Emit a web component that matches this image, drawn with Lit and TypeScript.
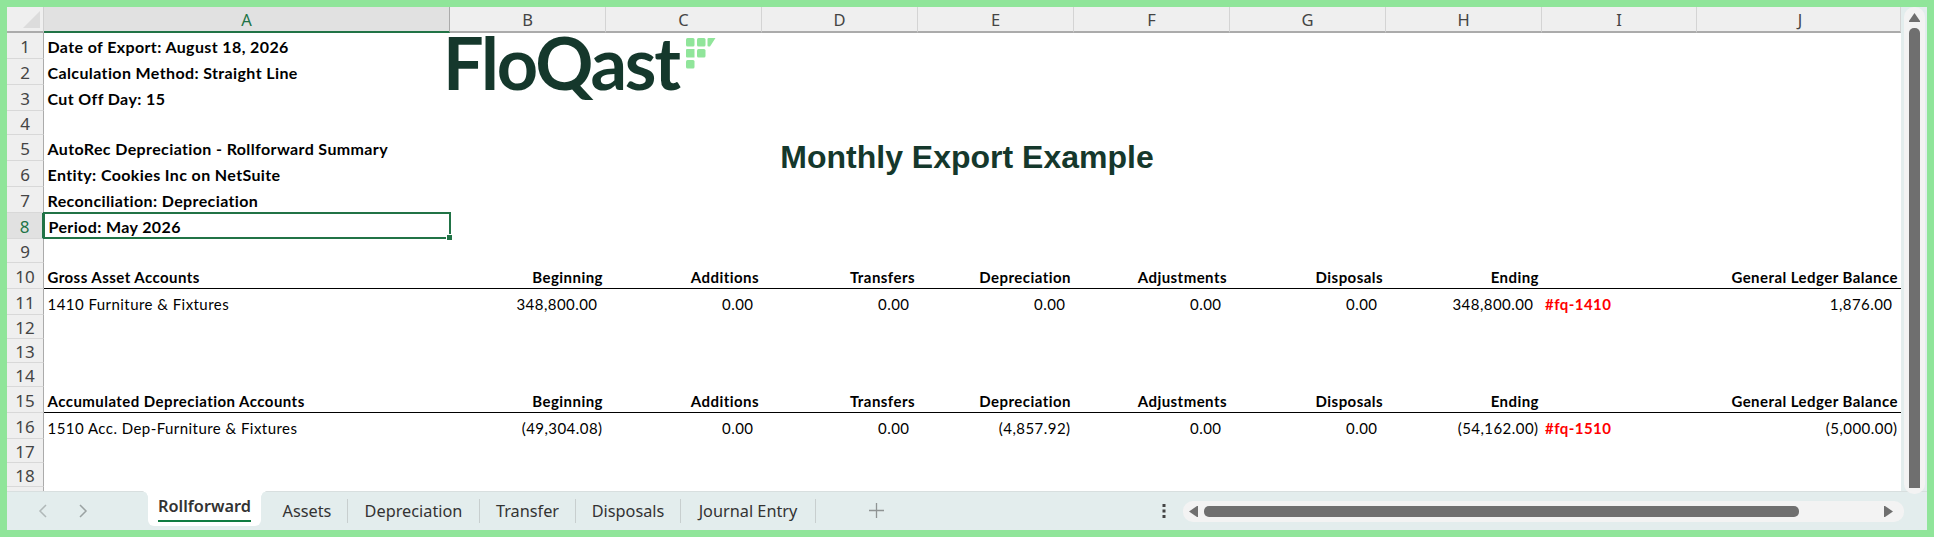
import { LitElement, html, css } from "lit";
import { customElement } from "lit/decorators.js";

const ROW_H = [26, 26, 26, 24, 26, 26, 26, 26, 24, 26, 26, 24, 24, 24, 26, 26, 24, 24, 24];
const COLS = ["A", "B", "C", "D", "E", "F", "G", "H", "I", "J"];
const META: Record<number, string> = {
  1: "Date of Export: August 18, 2026",
  2: "Calculation Method: Straight Line",
  3: "Cut Off Day: 15",
  5: "AutoRec Depreciation - Rollforward Summary",
  6: "Entity: Cookies Inc on NetSuite",
  7: "Reconciliation: Depreciation",
  8: "Period: May 2026",
};
const HEADS = ["Beginning", "Additions", "Transfers", "Depreciation", "Adjustments", "Disposals", "Ending"];
const DATA: Record<number, { label: string; head: string; vals: string[]; tag: string; gl: string }> = {
  10: { label: "1410 Furniture & Fixtures", head: "Gross Asset Accounts", vals: ["348,800.00", "0.00", "0.00", "0.00", "0.00", "0.00", "348,800.00"], tag: "#fq-1410", gl: "1,876.00" },
  15: { label: "1510 Acc. Dep-Furniture & Fixtures", head: "Accumulated Depreciation Accounts", vals: ["(49,304.08)", "0.00", "0.00", "(4,857.92)", "0.00", "0.00", "(54,162.00)"], tag: "#fq-1510", gl: "(5,000.00)" },
};
const TABS = ["Assets", "Depreciation", "Transfer", "Disposals", "Journal Entry"];

@customElement("app-root")
export class AppRoot extends LitElement {
  static styles = css`
    :host { display: block; width: 1934px; height: 537px; background: #90e59a; padding: 7px; box-sizing: border-box; overflow: hidden; font-family: "Lato", "Open Sans", sans-serif; }
    .win { width: 1920px; height: 523px; display: grid; grid-template-columns: 1894px 26px; grid-template-rows: 484px 39px; background: #e3eded; position: relative; }
    .sheet { position: relative; overflow: hidden; background: #fff; display: grid; grid-template-columns: 37px 406px repeat(7, 156px) 155px 204px; grid-template-rows: 26px 26px 26px 26px 24px 26px 26px 26px 26px 24px 26px 26px 24px 24px 24px 26px 26px 24px 24px 24px; height: 484px; }
    .corner { background: #efefef; border-bottom: 2px solid #ababab; border-right: 1px solid #d0d0d0; box-sizing: border-box; position: relative; }
    .corner svg { position: absolute; right: 3px; bottom: 3px; display: block; }
    .ch { background: #efefef; border-bottom: 2px solid #ababab; border-right: 1px solid #d4d4d4; box-sizing: border-box; display: flex; align-items: center; justify-content: center; padding-top: 1px; font: 400 16.5px "Noto Sans", sans-serif; color: #444; }
    .ch.sel { background: #e1e1e1; color: #217346; border-bottom-color: #217346; border-right-color: #ababab; }
    .ch.last { padding-left: 3px; }
    .rh { background: #efefef; border-bottom: 1px solid #d8d8d8; border-right: 1px solid #ababab; box-sizing: border-box; display: flex; align-items: center; justify-content: center; padding-top: 1px; font: 400 17px "Noto Sans", sans-serif; color: #444; }
    .rh.sel { background: #e1e1e1; color: #217346; border-right: 2px solid #217346; }
    .c { box-sizing: border-box; display: flex; align-items: flex-end; padding: 0 3.5px 1px; font-size: 15px; letter-spacing: 0.45px; line-height: 20px; color: #000; white-space: nowrap; min-width: 0; }
    .m { font-size: 16px; letter-spacing: 0.38px; padding-bottom: 2px; }
    .b { font-weight: 700; }
    .r { justify-content: flex-end; padding-right: 3px; }
    .num { padding-right: 8.5px; }
    .neg { padding-right: 3.5px; }
    .u { border-bottom: 1px solid #000; }
    .tag { color: #ff0000; font-weight: 700; padding-left: 3px; }
    .selbox { grid-column: 2; grid-row: 9; border: 2px solid #217346; margin: -1px -1px 0 -1px; position: relative; box-sizing: border-box; padding: 0 3.5px 0; align-items: flex-end; }
    .handle { position: absolute; right: -3px; bottom: -3px; width: 5px; height: 5px; background: #217346; border: 1px solid #fff; box-sizing: content-box; margin: -1px; }
    .logo { position: absolute; left: 436px; top: 29px; display: flex; align-items: flex-start; color: #15382c; }
    .word { font: 700 72px/52px "Lato", sans-serif; letter-spacing: -2.2px; }
    .mark { display: block; margin: 2px 0 0 7px; }
    .title { position: absolute; left: 414px; top: 130px; width: 1092px; text-align: center; font: 700 32px/40px "Liberation Sans", sans-serif; color: #15382c; }
    .vs { background: #f3f3f3; display: flex; flex-direction: column; align-items: center; box-sizing: border-box; height: 487px; position: relative; z-index: 1; border-radius: 10px; margin-left: 3px; width: 21px; }
    .vs svg { display: block; margin-top: 6px; flex: none; }
    .vthumb { width: 11px; flex: 1; margin-top: 6px; background: #6f6f6f; border-radius: 5px 5px 0 0; margin-bottom: 6px; }
    .bar { grid-column: 1 / span 2; display: flex; align-items: flex-start; border-top: 1px solid #d8dfdf; box-sizing: border-box; position: relative; font: 400 16.3px "Noto Sans", sans-serif; color: #333; }
    .nav { width: 141px; display: flex; align-items: center; gap: 32px; padding: 12px 0 0 31px; box-sizing: border-box; flex: none; }
    .nav svg { display: block; }
    .active { width: 113px; height: 35px; background: #fff; border-radius: 0 0 6px 6px; font-weight: 600; box-sizing: border-box; padding: 5px 10px 0; text-align: center; color: #333; flex: none; margin-top: -1px; position: relative; }
    .active::before, .active::after { content: ""; position: absolute; top: 0; width: 6px; height: 6px; }
    .active::before { left: -6px; background: radial-gradient(circle at 0 100%, transparent 5.5px, #fff 6px); }
    .active::after { right: -6px; background: radial-gradient(circle at 100% 100%, transparent 5.5px, #fff 6px); }
    .active span { display: block; border-bottom: 2px solid #107c41; padding-bottom: 3px; line-height: 21px; font-size: 16.3px; }
    .tabs { display: flex; margin-left: 6px; margin-top: 7px; flex: none; }
    .tab { height: 24px; display: flex; align-items: center; justify-content: center; border-right: 1px solid #c8cfcf; box-sizing: border-box; }
    .plus { display: block; margin: 11px 0 0 53px; flex: none; }
    .dots { display: block; margin: 12px 0 0 278px; flex: none; }
    .hs { position: absolute; right: 23px; top: 9px; width: 721px; height: 21px; background: #f3f3f3; border-radius: 10px; display: flex; align-items: center; padding: 0 11px 0 6px; box-sizing: border-box; }
    .hthumb { width: 595px; height: 11px; margin-left: 6px; background: #6f6f6f; border-radius: 5px; flex: none; }
    .hs svg { display: block; flex: none; }
    .spacer { flex: 1; }
  `;

  private dataRow(rowIdx: number) {
    const d = DATA[rowIdx];
    const headRow = rowIdx + 1;
    const valRow = rowIdx + 2;
    return html`
      <div class="c b u" style="grid-column:2;grid-row:${headRow}">${d.head}</div>
      ${HEADS.map((h, i) => html`<div class="c b r u" style="grid-column:${3 + i};grid-row:${headRow}">${h}</div>`)}
      <div class="c u" style="grid-column:10;grid-row:${headRow}"></div>
      <div class="c b r u" style="grid-column:11;grid-row:${headRow}">General Ledger Balance</div>
      <div class="c" style="grid-column:2;grid-row:${valRow}">${d.label}</div>
      ${d.vals.map((v, i) => html`<div class="c r ${v.startsWith("(") ? "neg" : "num"}" style="grid-column:${3 + i};grid-row:${valRow}">${v}</div>`)}
      <div class="c tag" style="grid-column:10;grid-row:${valRow}">${d.tag}</div>
      <div class="c r ${d.gl.startsWith("(") ? "neg" : "num"}" style="grid-column:11;grid-row:${valRow}">${d.gl}</div>
    `;
  }

  render() {
    return html`
      <div class="win">
        <div class="sheet">
          <div class="corner"><svg width="17" height="17" viewBox="0 0 17 17"><path d="M17 0V17H0Z" fill="#dcdcdc"/></svg></div>
          ${COLS.map((c, i) => html`<div class="ch ${i === 0 ? "sel" : ""} ${i === 9 ? "last" : ""}">${c}</div>`)}
          ${ROW_H.map((_, i) => html`<div class="rh ${i === 7 ? "sel" : ""}" style="grid-column:1;grid-row:${i + 2}">${i + 1}</div>`)}
          ${Object.entries(META).filter(([k]) => k !== "8").map(([k, v]) => html`<div class="c m b" style="grid-column:2;grid-row:${Number(k) + 1}">${v}</div>`)}
          <div class="c m b selbox">${META[8]}<i class="handle"></i></div>
          ${this.dataRow(10)}
          ${this.dataRow(15)}
          <div class="logo">
            <span class="word">FloQast</span>
            <svg class="mark" width="30" height="32" viewBox="0 0 30 32">
              <g fill="#90e59a">
                <rect x="0" y="0" width="8.5" height="8.5" rx="1.5"/>
                <rect x="11" y="0" width="8.5" height="8.5" rx="1.5"/>
                <path d="M22.5 0H29.5L24 8.5H22.5A1 1 0 0 1 21.5 7.5V1A1 1 0 0 1 22.5 0Z"/>
                <path d="M1 11H8.5V19.5H1A1 1 0 0 1 0 18.5V12A1 1 0 0 1 1 11Z"/>
                <rect x="11" y="11" width="8.5" height="8.5" rx="1.5"/>
                <rect x="0" y="22" width="8.5" height="8.5" rx="1.5"/>
              </g>
            </svg>
          </div>
          <div class="title">Monthly Export Example</div>
        </div>
        <div class="vs">
          <svg width="11" height="9" viewBox="0 0 11 9"><path d="M5.5 0L11 8V9H0V8Z" fill="#6f6f6f"/></svg>
          <div class="vthumb"></div>
        </div>
        <div class="bar">
          <div class="nav">
            <svg width="9" height="14" viewBox="0 0 9 14"><path d="M8 1L2 7L8 13" fill="none" stroke="#b0b8b8" stroke-width="1.5"/></svg>
            <svg width="9" height="14" viewBox="0 0 9 14"><path d="M1 1L7 7L1 13" fill="none" stroke="#9aa2a2" stroke-width="1.5"/></svg>
          </div>
          <div class="active"><span>Rollforward</span></div>
          <div class="tabs">
            ${TABS.map((t, i) => html`<div class="tab" style="width:${[81, 132, 96, 105, 135][i]}px">${t}</div>`)}
          </div>
          <svg class="plus" width="15" height="15" viewBox="0 0 15 15"><path d="M7.5 0V15M0 7.5H15" stroke="#8f9494" stroke-width="1.3"/></svg>
          <svg class="dots" width="4" height="14" viewBox="0 0 4 14"><g fill="#444"><rect x="0.5" y="0" width="3" height="3"/><rect x="0.5" y="5.5" width="3" height="3"/><rect x="0.5" y="11" width="3" height="3"/></g></svg>
          <div class="hs">
            <svg width="9" height="11" viewBox="0 0 9 11"><path d="M8 0H9V11H8L0 5.5Z" fill="#6f6f6f"/></svg>
            <div class="hthumb"></div>
            <div class="spacer"></div>
            <svg width="9" height="11" viewBox="0 0 9 11"><path d="M1 0H0V11H1L9 5.5Z" fill="#6f6f6f"/></svg>
          </div>
        </div>
      </div>
    `;
  }
}
